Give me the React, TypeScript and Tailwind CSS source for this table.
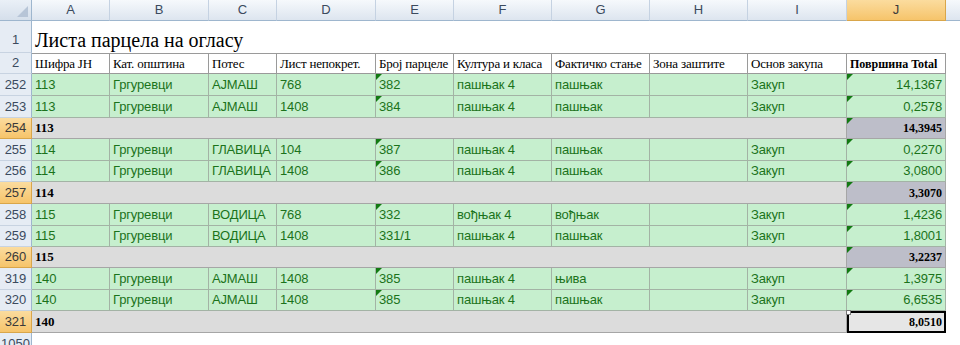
import React from "react";

const colW = [
  "w-[78px]",
  "w-[99px]",
  "w-[68px]",
  "w-[99px]",
  "w-[78px]",
  "w-[98px]",
  "w-[98px]",
  "w-[98px]",
  "w-[99px]",
  "w-[99px]",
];
const letters = ["A", "B", "C", "D", "E", "F", "G", "H", "I", "J"];
const headers = [
  "Шифра ЈН",
  "Кат. општина",
  "Потес",
  "Лист непокрет.",
  "Број парцеле",
  "Култура и класа",
  "Фактичко стање",
  "Зона заштите",
  "Основ закупа",
  "Површина Total",
];

type Row =
  | { kind: "data"; n: number; h: string; cells: string[] }
  | { kind: "total"; n: number; h: string; label: string; value: string; active?: boolean };

const rows: Row[] = [
  { kind: "data", n: 252, h: "h-[22px]", cells: ["113", "Гргуревци", "АЈМАШ", "768", "382", "пашњак 4", "пашњак", "", "Закуп", "14,1367"] },
  { kind: "data", n: 253, h: "h-[22px]", cells: ["113", "Гргуревци", "АЈМАШ", "1408", "384", "пашњак 4", "пашњак", "", "Закуп", "0,2578"] },
  { kind: "total", n: 254, h: "h-[21px]", label: "113", value: "14,3945" },
  { kind: "data", n: 255, h: "h-[22px]", cells: ["114", "Гргуревци", "ГЛАВИЦА", "104", "387", "пашњак 4", "пашњак", "", "Закуп", "0,2270"] },
  { kind: "data", n: 256, h: "h-[21px]", cells: ["114", "Гргуревци", "ГЛАВИЦА", "1408", "386", "пашњак 4", "пашњак", "", "Закуп", "3,0800"] },
  { kind: "total", n: 257, h: "h-[22px]", label: "114", value: "3,3070" },
  { kind: "data", n: 258, h: "h-[22px]", cells: ["115", "Гргуревци", "ВОДИЦА", "768", "332", "вођњак 4", "вођњак", "", "Закуп", "1,4236"] },
  { kind: "data", n: 259, h: "h-[21px]", cells: ["115", "Гргуревци", "ВОДИЦА", "1408", "331/1", "пашњак 4", "пашњак", "", "Закуп", "1,8001"] },
  { kind: "total", n: 260, h: "h-[21px]", label: "115", value: "3,2237" },
  { kind: "data", n: 319, h: "h-[22px]", cells: ["140", "Гргуревци", "АЈМАШ", "1408", "385", "пашњак 4", "њива", "", "Закуп", "1,3975"] },
  { kind: "data", n: 320, h: "h-[21px]", cells: ["140", "Гргуревци", "АЈМАШ", "1408", "385", "пашњак 4", "пашњак", "", "Закуп", "6,6535"] },
  { kind: "total", n: 321, h: "h-[22px]", label: "140", value: "8,0510", active: true },
];

const sans = "font-['Liberation_Sans',Arial,sans-serif]";
const serif = "font-['Liberation_Serif','Times_New_Roman',serif]";

function Flag() {
  return (
    <span className="absolute left-0 top-0 h-0 w-0 border-r-[6px] border-t-[6px] border-r-transparent border-t-[#127a12]" />
  );
}

function RowHead({ n, sel, h, low }: { n: number | string; sel?: boolean; h: string; low?: boolean }) {
  return (
    <div
      className={`${h} flex w-[32px] shrink-0 justify-center border-b border-r text-[13px] ${sans} ${
        low ? "items-end pb-[3px]" : "items-center"
      } ${
        sel
          ? "border-b-[#d9a64a] border-r-[#d9a64a] bg-gradient-to-b from-[#fbdc9e] to-[#f6c46a] text-[#3a3a3a]"
          : "border-b-[#c8d3e1] border-r-[#9eb6ce] bg-[#e6ecf4] text-[#3b4a5e]"
      }`}
    >
      {n}
    </div>
  );
}

export default function App() {
  return (
    <div className="h-[345px] w-[960px] overflow-hidden bg-white">
      {/* column letters */}
      <div className="flex h-[21px]">
        <div className="relative w-[32px] shrink-0 border-b border-r border-[#9eb6ce] bg-gradient-to-b from-[#eaf0f7] to-[#d5dfeb]">
          <span className="absolute bottom-[3px] right-[3px] h-0 w-0 border-b-[11px] border-l-[11px] border-b-[#b7c5d7] border-l-transparent" />
        </div>
        {letters.map((l, i) => (
          <div
            key={l}
            className={`${colW[i]} flex shrink-0 items-center justify-center border-b border-r text-[13px] ${sans} ${
              l === "J"
                ? "border-b-[#d9a64a] border-r-[#d9a64a] bg-gradient-to-b from-[#fbdc9e] to-[#f6c46a] text-[#3a3a3a]"
                : "border-b-[#9eb6ce] border-r-[#c5d2e2] bg-gradient-to-b from-[#f6f9fc] to-[#dde5ef] text-[#3b4a5e]"
            }`}
          >
            {l}
          </div>
        ))}
        <div className="flex-1 border-b border-[#9eb6ce] bg-gradient-to-b from-[#f6f9fc] to-[#dde5ef]" />
      </div>

      {/* title row */}
      <div className="flex h-[32px]">
        <RowHead n={1} h="h-[32px]" low />
        <div className={`flex flex-1 items-end pb-[3px] pl-[3px] text-[20px] leading-none text-black ${serif}`}>
          Листа парцела на огласу
        </div>
      </div>

      {/* header row */}
      <div className="flex h-[21px]">
        <RowHead n={2} h="h-[21px]" />
        {headers.map((t, i) => (
          <div
            key={t}
            className={`${colW[i]} flex shrink-0 items-center overflow-hidden whitespace-nowrap border-b border-r border-t border-[#9a9a9a] px-[3px] text-black ${serif} ${
              i === 9 ? "text-[12px] font-bold" : "text-[13px] tracking-[-0.2px]"
            }`}
          >
            {t}
          </div>
        ))}
      </div>

      {rows.map((r) =>
        r.kind === "data" ? (
          <div key={r.n} className={`flex ${r.h}`}>
            <RowHead n={r.n} h={r.h} />
            {r.cells.map((c, i) => (
              <div
                key={i}
                className={`${colW[i]} relative flex shrink-0 items-center overflow-hidden whitespace-nowrap border-b border-r border-[#a3b3a5] bg-[#c6efce] px-[3px] text-[13px] tracking-[-0.15px] text-[#1b731b] ${sans} ${
                  i === 9 ? "justify-end" : ""
                }`}
              >
                {(i === 4 || i === 9) && c !== "331/1" && <Flag />}
                {c}
              </div>
            ))}
          </div>
        ) : (
          <div key={r.n} className={`flex ${r.h}`}>
            <RowHead n={r.n} h={r.h} sel />
            <div
              className={`flex w-[815px] shrink-0 items-center border-b border-r border-[#a6a6a6] bg-[#dcdcdc] px-[3px] text-[13px] font-bold text-black ${serif}`}
            >
              {r.label}
            </div>
            {r.active ? (
              <div
                className={`relative flex w-[99px] shrink-0 items-center justify-end border-2 border-black bg-[#e6e6e6] px-[2px] text-[12px] font-bold text-black ${serif}`}
              >
                <span className="absolute -left-[3px] -top-[3px] h-[5px] w-[5px] border border-[#777] bg-white" />
                {r.value}
              </div>
            ) : (
              <div
                className={`relative flex w-[99px] shrink-0 items-center justify-end border-b border-r border-[#a6a6a6] bg-[#bdbec9] px-[3px] text-[12px] font-bold text-black ${serif}`}
              >
                <Flag />
                {r.value}
              </div>
            )}
          </div>
        )
      )}

      {/* bottom partial row */}
      <div className="flex h-[12px] overflow-hidden">
        <div
          className={`flex h-[22px] w-[32px] shrink-0 items-center justify-center border-r border-[#9eb6ce] bg-[#e6ecf4] text-[13px] text-[#3b4a5e] ${sans}`}
        >
          1050
        </div>
      </div>
    </div>
  );
}
